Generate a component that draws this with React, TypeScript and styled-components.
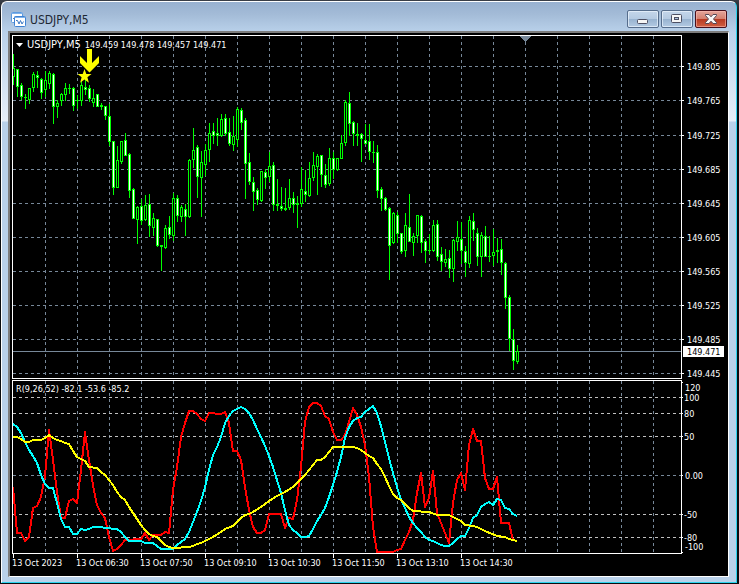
import React from "react";
import styled, { createGlobalStyle } from "styled-components";

const LABEL_FONT = '"DejaVu Sans Condensed", "Noto Sans", sans-serif';
const SLATE = "#778899";
const LIME = "#00ff00";

const GlobalStyle = createGlobalStyle`
  * { box-sizing: border-box; }
  body {
    margin: 0;
    background: #0a0c10;
    font-family: ${LABEL_FONT};
  }
`;

const Desktop = styled.main`
  display: flex;
  min-height: 100vh;
  padding: 1px 2px 1px 1px;
  background: linear-gradient(#3a3f48, #0a0c10 20px);
`;

const WindowFrame = styled.section`
  flex: 1;
  min-width: 0;
  display: flex;
  flex-direction: column;
  padding: 0 7px 5px 6px;
  border: 1px solid #ffffff;
  border-right-color: #2cd3ee;
  border-bottom-color: #2cd3ee;
  border-radius: 6px 6px 0 0;
  background: linear-gradient(
    #98b1d0 0,
    #a3bbd7 12px,
    #b9d1ea 30px,
    #e6eef8 119px,
    #b9d1ea 120px
  );
`;

const TitleBar = styled.header`
  display: flex;
  align-items: center;
  height: 29px;
  padding: 5px 0 0 3px;
`;

const Title = styled.h1`
  flex: 1;
  margin: 0 0 0 4px;
  padding-top: 2px;
  color: #1d2733;
  font-size: 12px;
  line-height: 16px;
  font-weight: 400;
`;

const Controls = styled.div`
  display: flex;
  gap: 2px;
  padding-right: 2px;
`;

const ControlButton = styled.button<{ $danger?: boolean }>`
  display: flex;
  align-items: center;
  justify-content: center;
  width: 32px;
  height: 18px;
  padding: 0;
  border: 1px solid ${(p) => (p.$danger ? "#48101c" : "#566d8c")};
  border-radius: 2px;
  box-shadow: inset 0 0 0 1px
    ${(p) => (p.$danger ? "rgba(255,190,180,.55)" : "rgba(240,248,255,.65)")};
  background: ${(p) =>
    p.$danger
      ? "linear-gradient(#e3a59b 0, #d5806f 48%, #b83a22 52%, #cf5f42 100%)"
      : "linear-gradient(#c4d6ea 0, #b5cae2 48%, #98b3d0 52%, #b3cae3 100%)"};
`;

const Client = styled.div`
  flex: 1;
  display: grid;
  grid-template-columns: minmax(0, 1fr) 46px;
  grid-template-rows: auto auto 1fr;
  row-gap: 1px;
  padding: 2px 0 0 2px;
  border: 1px solid #ffffff;
  border-top: 2px solid #7d7d7d;
  border-left: 2px solid #7d7d7d;
  background: #000000;
`;

const Pane = styled.div`
  position: relative;
  border: 1px solid #ffffff;
`;

const Drawing = styled.svg<{ $height: number }>`
  display: block;
  width: 100%;
  height: ${(p) => p.$height}px;
  shape-rendering: crispEdges;
`;

const AxisLabel = styled.text<{ $dark?: boolean }>`
  fill: ${(p) => (p.$dark ? "#000000" : "#ffffff")};
  font-family: ${LABEL_FONT};
  font-size: 9px;
`;

const PaneCaption = styled.div`
  position: absolute;
  top: 2px;
  left: 3px;
  display: flex;
  align-items: baseline;
  gap: 4px;
  color: #ffffff;
  font-size: 9px;
  line-height: 13px;
  white-space: pre;
`;

const SymbolName = styled.span`
  font-size: 11px;
`;

const CollapseButton = styled.button`
  display: flex;
  align-self: center;
  padding: 0;
  border: 0;
  background: transparent;
`;

const TimeAxis = styled.div`
  grid-column: 1 / -1;
  display: flex;
  overflow: hidden;
  margin-top: -1px;
`;

const TimeMark = styled.time`
  flex: 0 0 64px;
  color: #ffffff;
  font-size: 9px;
  line-height: 11px;
  white-space: nowrap;

  &::before {
    content: "";
    display: block;
    width: 1px;
    height: 4px;
    margin-left: 1px;
    background: #ffffff;
  }
`;

/* ---------- data ---------- */

type Kind = "u" | "d";
type Candle = [high: number, top: number, bottom: number, low: number, kind: Kind];

const X0 = 13;
const STEP = 4;

const CANDLES: Candle[] = [
  [54, 68, 77, 85, "u"], [69, 69, 87, 97, "d"], [83, 85, 97, 100, "d"], [94, 97, 98, 109, "d"],
  [88, 88, 100, 104, "u"], [72, 74, 88, 92, "u"], [71, 75, 78, 88, "d"], [78, 79, 93, 99, "d"],
  [71, 80, 90, 97, "u"], [71, 73, 84, 89, "u"], [73, 74, 107, 124, "d"], [100, 103, 107, 118, "u"],
  [93, 94, 101, 106, "u"], [83, 88, 95, 101, "u"], [84, 88, 89, 94, "d"], [87, 88, 106, 111, "d"],
  [95, 100, 101, 109, "d"], [80, 85, 101, 106, "u"], [80, 87, 90, 95, "d"], [85, 88, 99, 102, "d"],
  [89, 98, 103, 107, "u"], [94, 94, 107, 107, "d"], [103, 105, 107, 110, "d"], [106, 106, 116, 120, "d"],
  [104, 116, 142, 146, "d"], [141, 141, 188, 195, "d"], [146, 160, 188, 188, "u"], [141, 141, 162, 164, "u"],
  [133, 140, 156, 156, "d"], [153, 154, 191, 198, "d"], [188, 189, 219, 219, "d"], [206, 207, 220, 244, "u"],
  [199, 206, 221, 225, "d"], [195, 205, 220, 221, "u"], [194, 204, 226, 237, "d"], [213, 218, 228, 236, "u"],
  [219, 219, 246, 247, "d"], [245, 245, 247, 271, "d"], [225, 228, 248, 249, "u"], [216, 227, 235, 239, "d"],
  [193, 198, 236, 241, "u"], [195, 198, 216, 222, "d"], [205, 207, 217, 222, "u"], [204, 209, 217, 236, "d"],
  [159, 160, 217, 218, "u"], [128, 150, 160, 168, "u"], [145, 147, 177, 198, "d"], [151, 162, 178, 217, "u"],
  [144, 150, 165, 176, "u"], [123, 133, 150, 162, "u"], [123, 131, 136, 144, "d"], [118, 133, 136, 146, "d"],
  [114, 119, 136, 137, "u"], [114, 118, 134, 136, "d"], [118, 132, 144, 146, "d"], [116, 136, 145, 151, "u"],
  [107, 109, 140, 147, "u"], [108, 110, 123, 130, "d"], [118, 120, 164, 199, "d"], [153, 162, 182, 185, "d"],
  [177, 182, 192, 211, "d"], [188, 190, 200, 205, "d"], [171, 171, 201, 202, "u"], [169, 172, 178, 189, "d"],
  [152, 166, 177, 182, "u"], [162, 165, 205, 211, "d"], [179, 204, 206, 211, "d"], [187, 206, 209, 211, "d"],
  [188, 208, 210, 211, "d"], [179, 198, 208, 210, "u"], [192, 198, 205, 213, "d"], [196, 203, 205, 228, "d"],
  [167, 189, 204, 207, "u"], [170, 191, 195, 202, "d"], [162, 178, 196, 197, "u"], [152, 165, 178, 181, "u"],
  [154, 156, 167, 195, "u"], [155, 155, 175, 187, "d"], [164, 175, 185, 188, "d"], [148, 158, 184, 186, "u"],
  [152, 158, 170, 179, "d"], [158, 158, 170, 171, "u"], [135, 143, 159, 159, "u"], [100, 102, 143, 146, "u"],
  [92, 103, 124, 136, "d"], [121, 122, 134, 146, "d"], [123, 134, 136, 146, "d"], [133, 134, 139, 162, "d"],
  [124, 140, 144, 145, "d"], [124, 141, 152, 160, "d"], [141, 152, 153, 163, "d"], [145, 152, 191, 198, "d"],
  [187, 189, 199, 211, "d"], [197, 198, 210, 211, "d"], [207, 208, 246, 280, "d"], [212, 213, 243, 244, "u"],
  [212, 215, 234, 243, "d"], [233, 233, 252, 254, "d"], [213, 225, 251, 257, "u"], [194, 227, 242, 242, "d"],
  [233, 236, 243, 256, "u"], [215, 215, 236, 243, "u"], [215, 216, 243, 253, "d"], [239, 241, 251, 263, "d"],
  [234, 250, 251, 254, "d"], [220, 225, 251, 252, "u"], [220, 224, 257, 261, "d"], [247, 254, 262, 271, "d"],
  [249, 259, 263, 267, "u"], [250, 258, 269, 278, "d"], [239, 240, 269, 282, "u"], [221, 237, 242, 251, "u"],
  [222, 239, 251, 264, "d"], [246, 251, 263, 277, "d"], [216, 220, 264, 268, "u"], [213, 221, 230, 241, "d"],
  [228, 233, 257, 266, "d"], [232, 235, 257, 277, "u"], [226, 236, 257, 257, "d"], [236, 256, 257, 262, "d"],
  [229, 252, 256, 266, "u"], [238, 250, 252, 263, "d"], [239, 249, 263, 275, "d"], [262, 263, 298, 309, "d"],
  [295, 297, 339, 351, "d"], [329, 339, 361, 370, "d"], [345, 351, 362, 364, "u"],
];

const FAST =
  "13,487 17,533 21,533 25,541 29,537 33,508 37,506 41,497 45,476 49,430 53,460 57,492 61,518 65,518 69,501 73,499 77,503 81,470 85,432 89,460 93,485 97,505 101,513 105,518 109,537 113,551 117,549 121,545 125,540 141,539 145,533 149,540 153,535 161,535 165,532 169,533 173,490 177,467 181,437 185,423 189,411 193,411 197,414 201,419 205,421 209,413 213,413 217,414 221,414 225,412 229,423 233,451 237,451 241,460 245,487 249,510 253,527 257,533 261,533 265,530 269,514 281,514 285,528 289,518 293,519 297,500 301,467 305,422 309,407 313,403 317,403 321,406 325,416 329,419 333,432 337,440 341,440 345,435 349,422 353,408 357,415 361,427 365,445 369,477 373,527 377,552 393,552 397,550 401,549 405,540 409,532 413,520 417,493 421,473 425,507 429,498 433,471 437,513 441,523 445,533 449,543 453,503 457,480 461,473 465,490 469,445 473,429 477,441 481,441 485,478 489,489 493,489 497,477 501,523 509,523 513,540 517,541";

const MEDIUM =
  "13,424 17,427 21,433 25,442 29,450 33,456 37,463 41,475 45,484 49,488 53,488 57,503 61,519 65,527 69,527 73,534 77,534 81,529 85,530 89,529 93,527 101,527 105,528 117,529 121,532 125,537 129,541 141,541 145,543 153,543 157,546 161,549 173,549 177,545 181,542 185,539 189,532 193,522 197,512 201,501 205,487 209,470 213,455 217,447 221,437 225,423 229,416 233,411 237,409 241,407 245,409 249,413 253,420 257,429 261,437 265,446 269,456 273,467 277,480 281,493 285,510 289,525 293,530 297,533 301,537 305,537 309,536 313,529 317,521 321,515 325,508 329,497 333,485 337,472 341,457 345,438 349,427 353,421 357,418 361,417 365,412 369,409 373,406 377,413 381,426 385,442 389,458 393,473 397,487 401,500 405,508 409,517 413,523 417,528 421,532 425,537 429,540 433,541 437,543 441,545 445,546 449,546 453,543 457,539 461,536 465,536 469,528 473,518 477,515 481,507 485,504 489,502 493,505 497,499 501,500 505,508 509,509 513,514 517,516";

const SLOW =
  "13,437 17,437 21,439 25,442 29,442 33,440 41,440 45,438 49,435 53,438 57,440 61,441 65,443 69,444 73,451 77,457 81,459 85,461 89,467 97,468 101,472 105,475 109,480 113,485 117,492 121,497 125,500 129,507 133,513 137,519 141,525 145,530 149,534 153,536 157,537 161,541 165,545 169,547 173,548 189,547 193,546 197,544 201,543 205,541 213,537 221,532 225,529 233,526 237,522 241,518 245,515 249,514 253,512 261,507 269,501 277,496 285,492 293,487 301,479 305,475 309,470 313,465 317,460 321,460 325,457 329,452 333,447 353,447 357,448 361,450 365,453 369,456 373,458 377,464 381,469 385,477 389,486 393,494 397,498 401,500 405,504 409,508 413,511 429,512 437,515 449,515 453,517 461,521 465,525 473,526 477,527 485,531 497,536 505,537 509,539 517,541";

const PRICE_MARKS = [
  { y: 66, label: "149.805" },
  { y: 100, label: "149.765" },
  { y: 135, label: "149.725" },
  { y: 169, label: "149.685" },
  { y: 203, label: "149.645" },
  { y: 237, label: "149.605" },
  { y: 271, label: "149.565" },
  { y: 305, label: "149.525" },
  { y: 339, label: "149.485" },
  { y: 373, label: "149.445" },
];

const LEVELS = [
  { y: 397, label: "100", x: 2, color: "#c0c0c0" },
  { y: 413, label: "80", x: 2, color: "#c0c0c0" },
  { y: 436, label: "50", x: 2, color: "#c0c0c0" },
  { y: 475, label: "0.00", x: 3, color: SLATE },
  { y: 514, label: "-50", x: 2, color: "#c0c0c0" },
  { y: 537, label: "-80", x: 2, color: "#c0c0c0" },
];

const TIMES = [
  "13 Oct 2023", "13 Oct 06:30", "13 Oct 07:50", "13 Oct 09:10",
  "13 Oct 10:30", "13 Oct 11:50", "13 Oct 13:10", "13 Oct 14:30",
];

const COLUMNS = Array.from({ length: 40 }, (_, i) => 45 + i * 32);
const LAST_PRICE_Y = 351;
const PRICE_TOP = 35;
const OSC_TOP = 380;

/* ---------- drawing parts ---------- */

const VerticalGrid = ({ top, bottom }: { top: number; bottom: number }) => (
  <g stroke={SLATE} strokeDasharray="3 3">
    {COLUMNS.map((x) => (
      <line key={x} x1={x + 0.5} x2={x + 0.5} y1={top} y2={bottom} />
    ))}
  </g>
);

const HorizontalLine = ({ y, color, solid }: { y: number; color: string; solid?: boolean }) => (
  <line x1="13" x2="200%" y1={y + 0.5} y2={y + 0.5} stroke={color} strokeDasharray={solid ? undefined : "3 3"} />
);

const CandleMark = ({ index, candle }: { index: number; candle: Candle }) => {
  const [high, top, bottom, low, kind] = candle;
  const x = X0 + index * STEP;
  const height = Math.max(1, bottom - top);
  return (
    <g>
      <rect x={x} y={high} width="1" height={low - high} fill={LIME} />
      <rect x={x - 1} y={top} width="3" height={height} fill={LIME} />
      {height > 2 && (
        <rect x={x} y={top + 1} width="1" height={height - 2} fill={kind === "u" ? "#000000" : "#ffffff"} />
      )}
    </g>
  );
};

const ChartIcon = () => (
  <svg width="15" height="15" viewBox="0 0 15 15" aria-hidden="true">
    <rect x="0.5" y="0.5" width="11" height="10" rx="1" fill="#ffffff" stroke="#5b9ae0" />
    <path d="M1 1.5h10" stroke="#7fb2ea" />
    <path d="M2 6.5h2v-2h1v3M7 4v3M6 5.5h3" fill="none" stroke="#4a88d0" />
    <rect x="3.5" y="4.5" width="11" height="10" rx="1" fill="#ffffff" stroke="#3f82d2" />
    <path d="M4 5.5h10" stroke="#7fb2ea" strokeWidth="1" />
    <path d="M5 8.500l1.500 0 1.500 3.500 1.500-3.500 1.500 3.500 1.500-2.500" fill="none" stroke="#3a78c4" />
  </svg>
);

const MinimizeIcon = () => (
  <svg width="12" height="12" viewBox="0 0 12 12" aria-hidden="true">
    <rect x="0.500" y="6.500" width="10" height="4" rx="1" fill="#f6f6f6" stroke="#4d4f63" />
  </svg>
);

const MaximizeIcon = () => (
  <svg width="12" height="12" viewBox="0 0 12 12" aria-hidden="true">
    <rect x="0.500" y="1.500" width="10" height="8" rx="1" fill="#f6f6f6" stroke="#4d4f63" />
    <rect x="3.500" y="4.500" width="4" height="2" fill="#a9c0dc" stroke="#4d4f63" />
  </svg>
);

const CloseIcon = () => (
  <svg width="12" height="12" viewBox="0 0 12 12" aria-hidden="true">
    <path
      d="M0.500 1.500H4L6 3.800 8 1.500H11.500V2.500L8.500 6 11.500 9.500V10.500H8L6 8.200 4 10.500H0.500V9.500L3.500 6 0.500 2.500Z"
      fill="#f8f8f8"
      stroke="#554856"
    />
  </svg>
);

const PriceDrawing = () => (
  <Drawing $height={342} aria-label="USDJPY five minute candles">
    <g transform="translate(-13 -36)">
      <VerticalGrid top={PRICE_TOP + 1} bottom={378} />
      {PRICE_MARKS.map((m) => (
        <HorizontalLine key={m.y} y={m.y} color={SLATE} />
      ))}
      <HorizontalLine y={LAST_PRICE_Y} color={SLATE} solid />
      <path d="M520 36H531L525.500 42Z" fill={SLATE} />
      {CANDLES.map((candle, i) => (
        <CandleMark key={i} index={i} candle={candle} />
      ))}
      <g fill="#ffff00" shapeRendering="auto">
        <path d="M87 49H92V63L99 56V63L89.500 72.500 80 63V56L87 63Z" />
        <path d="M84.500 69L86.300 74H91.500L87.400 77.300 88.900 82.800 84.500 79.600 80.100 82.800 81.600 77.300 77.500 74H82.700Z" />
      </g>
    </g>
  </Drawing>
);

const OscillatorDrawing = () => (
  <Drawing $height={172} aria-label="Oscillator with three periods">
    <g transform="translate(-13 -381)">
      <VerticalGrid top={OSC_TOP + 1} bottom={553} />
      {LEVELS.map((l) => (
        <HorizontalLine key={l.y} y={l.y} color={l.color} />
      ))}
      <g fill="none" strokeWidth="2" strokeLinejoin="round">
        <polyline points={FAST} stroke="#ff0000" />
        <polyline points={MEDIUM} stroke="#00ffff" />
        <polyline points={SLOW} stroke="#ffff00" />
      </g>
    </g>
  </Drawing>
);

const PriceScale = () => (
  <Drawing $height={344} aria-label="Price scale">
    {PRICE_MARKS.map((m) => (
      <g key={m.y}>
        <rect x="0" y={m.y - PRICE_TOP} width="2" height="1" fill="#ffffff" />
        <AxisLabel x="5" y={m.y - PRICE_TOP + 4}>{m.label}</AxisLabel>
      </g>
    ))}
    <rect x="1" y={LAST_PRICE_Y - PRICE_TOP - 5} width="41" height="11" fill="#ffffff" />
    <AxisLabel $dark x="5" y={LAST_PRICE_Y - PRICE_TOP + 4}>149.471</AxisLabel>
  </Drawing>
);

const LevelScale = () => (
  <Drawing $height={174} aria-label="Oscillator scale">
    <rect x="0" y="2" width="1" height="1" fill="#ffffff" />
    <AxisLabel x="3" y="11">120</AxisLabel>
    {LEVELS.map((l) => (
      <g key={l.y}>
        <rect x="0" y={l.y - OSC_TOP} width="1" height="1" fill="#ffffff" />
        <AxisLabel x={l.x} y={l.y - OSC_TOP + 4}>{l.label}</AxisLabel>
      </g>
    ))}
    <AxisLabel x="3" y="170">-100</AxisLabel>
    <rect x="0" y="172" width="1" height="1" fill="#ffffff" />
  </Drawing>
);

export default function App() {
  return (
    <Desktop>
      <GlobalStyle />
      <WindowFrame>
        <TitleBar>
          <ChartIcon />
          <Title>USDJPY,M5</Title>
          <Controls>
            <ControlButton aria-label="Minimize"><MinimizeIcon /></ControlButton>
            <ControlButton aria-label="Maximize"><MaximizeIcon /></ControlButton>
            <ControlButton $danger aria-label="Close"><CloseIcon /></ControlButton>
          </Controls>
        </TitleBar>
        <Client>
          <Pane>
            <PriceDrawing />
            <PaneCaption>
              <CollapseButton aria-label="Toggle trading panel">
                <svg width="7" height="4" viewBox="0 0 7 4" aria-hidden="true">
                  <path d="M0 0H7L3.500 4Z" fill="#ffffff" />
                </svg>
              </CollapseButton>
              <SymbolName>USDJPY,M5</SymbolName>
              <span>149.459 149.478 149.457 149.471</span>
            </PaneCaption>
          </Pane>
          <PriceScale />
          <Pane>
            <OscillatorDrawing />
            <PaneCaption>R(9,26,52) -82.1 -53.6 -85.2</PaneCaption>
          </Pane>
          <LevelScale />
          <TimeAxis>
            {TIMES.map((t) => (
              <TimeMark key={t}>{t}</TimeMark>
            ))}
          </TimeAxis>
        </Client>
      </WindowFrame>
    </Desktop>
  );
}
